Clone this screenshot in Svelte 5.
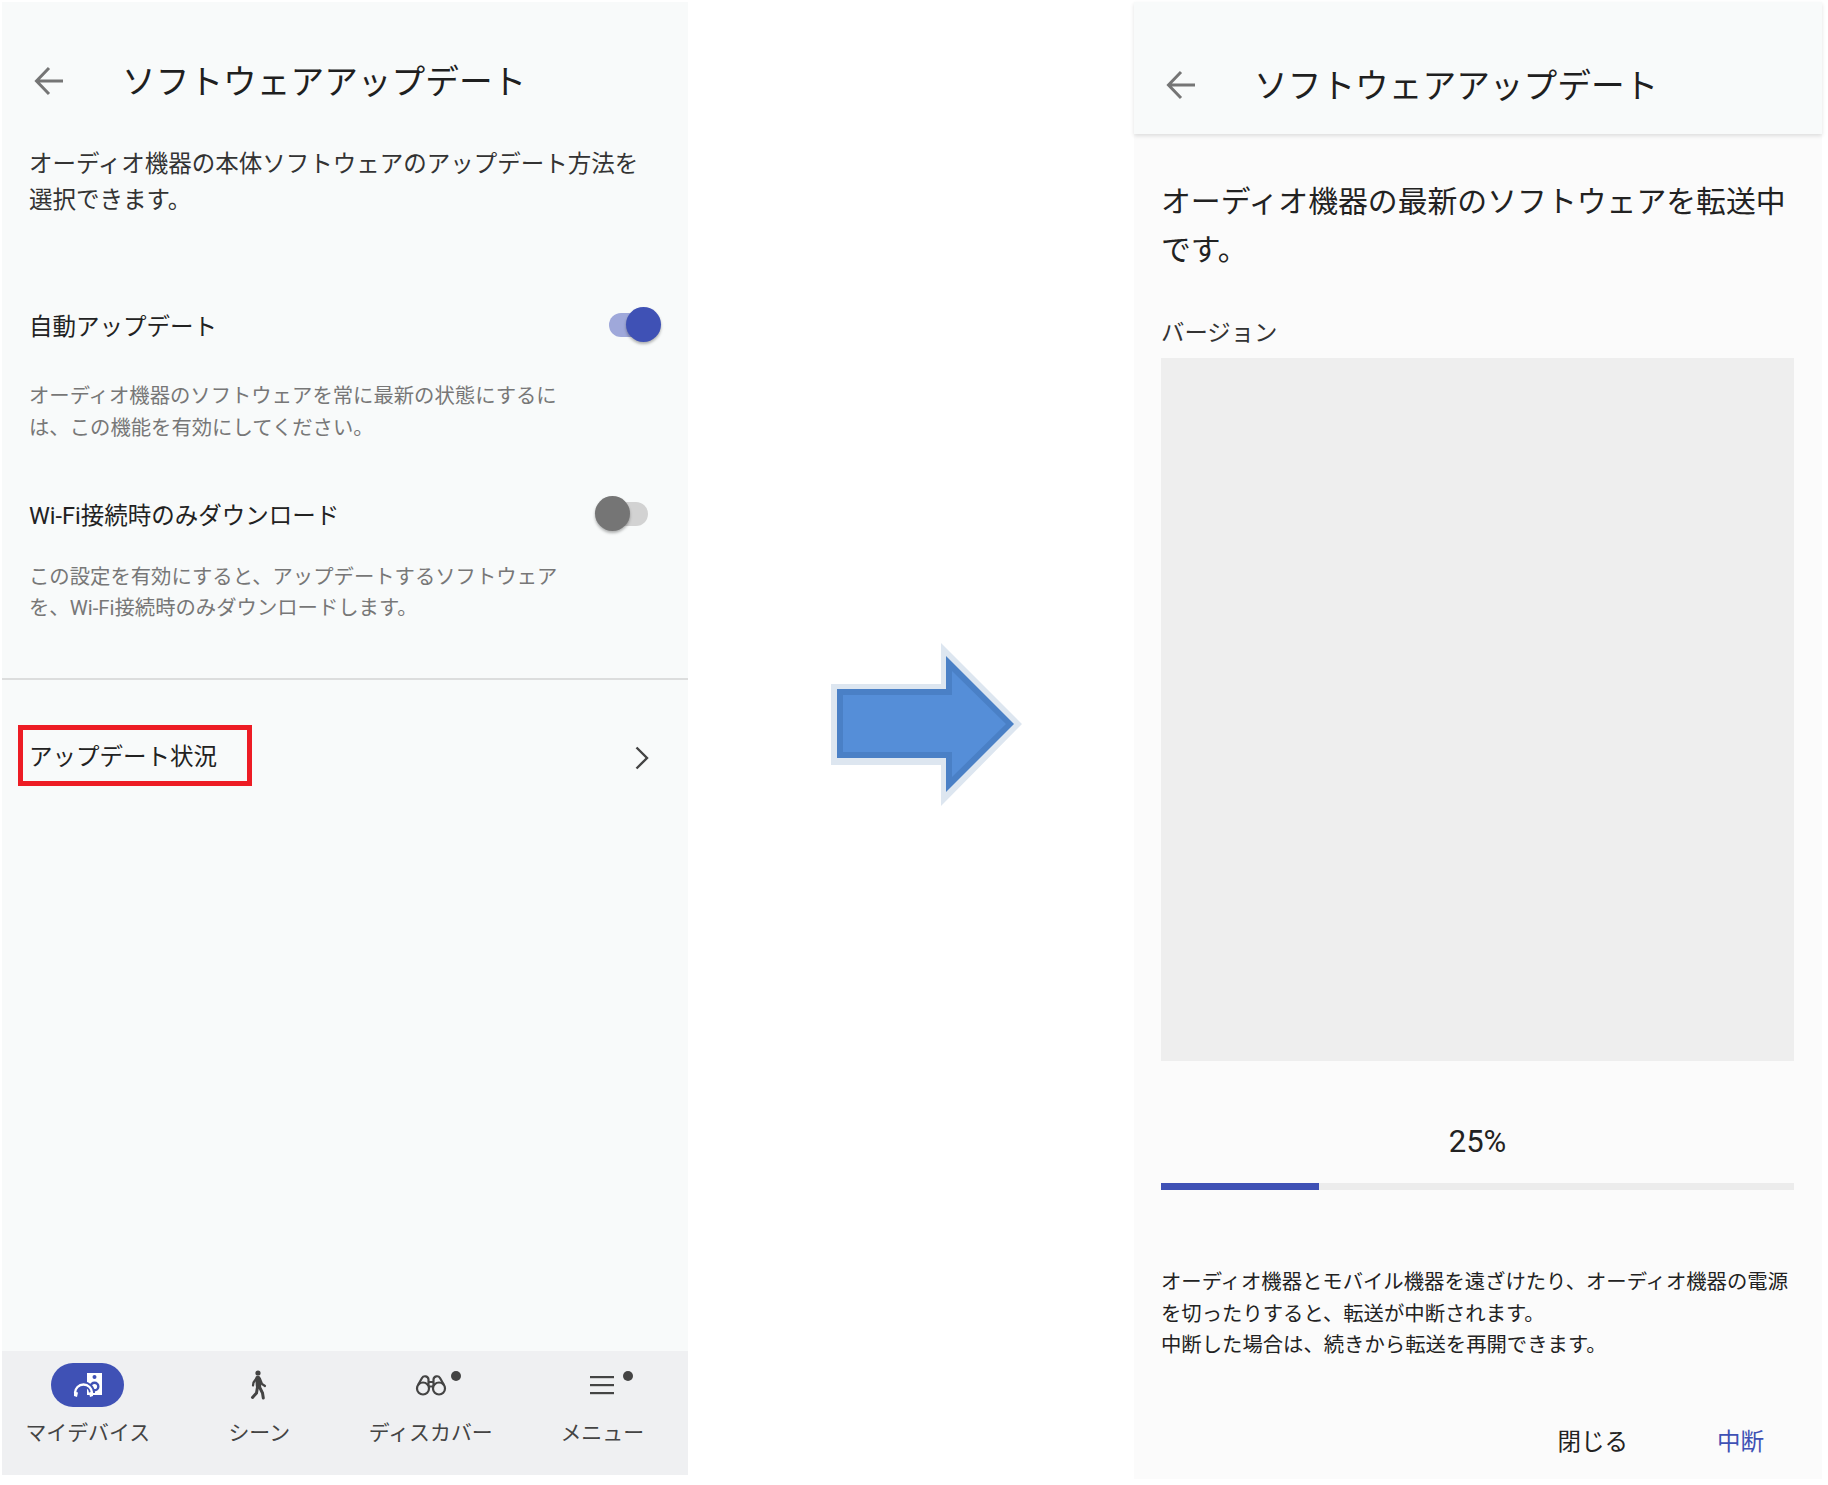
<script>
  const navItems = [
    { label: 'マイデバイス', icon: 'device', active: true },
    { label: 'シーン', icon: 'walk' },
    { label: 'ディスカバー', icon: 'binoculars', dot: true },
    { label: 'メニュー', icon: 'menu', dot: true }
  ];
  const progress = 25;
</script>

{#snippet back()}
  <svg class="back" width="30" height="30" viewBox="0 0 30 30" fill="none" stroke="#757575" stroke-width="3">
    <path d="M29 15H3M15 2 2.5 15 15 28" />
  </svg>
{/snippet}

<div class="page">
  <section class="panel left">
    <header class="head">
      {@render back()}
      <h1>ソフトウェアアップデート</h1>
    </header>
    <p class="intro">オーディオ機器の本体ソフトウェアのアップデート方法を<br />選択できます。</p>

    <div class="row first">
      <span class="row-label">自動アップデート</span>
      <span class="toggle on"><span class="thumb"></span></span>
    </div>
    <p class="hint first-hint">オーディオ機器のソフトウェアを常に最新の状態にするに<br />は、この機能を有効にしてください。</p>

    <div class="row second">
      <span class="row-label">Wi-Fi接続時のみダウンロード</span>
      <span class="toggle off"><span class="thumb"></span></span>
    </div>
    <p class="hint second-hint">この設定を有効にすると、アップデートするソフトウェア<br />を、Wi-Fi接続時のみダウンロードします。</p>

    <hr class="divider" />

    <div class="status-row">
      <span class="status-box">アップデート状況</span>
      <svg class="chevron" width="14" height="24" viewBox="0 0 14 24" fill="none" stroke="#444" stroke-width="2.4">
        <path d="M1.5 1.5 12 12 1.5 22.5" />
      </svg>
    </div>

    <nav class="nav">
      {#each navItems as item}
        <div class="nav-item">
          <div class="nav-icon" class:active={item.active}>
            {#if item.icon === 'device'}
              <svg width="32" height="26" viewBox="0 0 32 26">
                <rect x="15" y="1" width="15" height="22" fill="#fff" />
                <circle cx="22.5" cy="5" r="2" fill="#3f51b5" />
                <circle cx="22.5" cy="14.5" r="5" fill="#3f51b5" />
                <circle cx="22.5" cy="14.5" r="2.6" fill="#fff" />
                <path d="M3 21a8.5 8.5 0 0 1 17 0" fill="none" stroke="#3f51b5" stroke-width="6" />
                <path d="M3 21a8.5 8.5 0 0 1 17 0" fill="none" stroke="#fff" stroke-width="2.4" />
                <path d="M2 19.5l4 1-1 4.5-3-1zM21 19.5l-4 1 1 4.5 3-1z" fill="#fff" />
              </svg>
            {:else if item.icon === 'walk'}
              <svg width="18" height="30" viewBox="0 0 18 30" fill="none" stroke="#444" stroke-linecap="round">
                <circle cx="8" cy="3" r="2.6" fill="#444" stroke="none" />
                <path d="M8 8.5 8.5 16" stroke-width="5.4" />
                <path d="M10 9l2 5 3 2" stroke-width="2.2" />
                <path d="M6 9 3.5 12.5 3 15.5" stroke-width="2.2" />
                <path d="M7.5 17 6.5 23 2.5 27.5" stroke-width="3" />
                <path d="M9.5 17l3 6 .8 5" stroke-width="3" />
              </svg>
            {:else if item.icon === 'binoculars'}
              <svg width="32" height="22" viewBox="0 0 32 22" fill="none" stroke="#444" stroke-width="2.2">
                <circle cx="8" cy="14.5" r="6" />
                <circle cx="24" cy="14.5" r="6" />
                <path d="M3 11 7 4a3.5 3.5 0 0 1 6.5 1.5v6.5M29 11 25 4a3.5 3.5 0 0 0-6.5 1.5v6.5M13.5 8h5M13.5 12.5h5" />
              </svg>
            {:else}
              <svg width="24" height="20" viewBox="0 0 24 20" fill="#444">
                <rect y="1" width="24" height="2.2" />
                <rect y="9" width="24" height="2.2" />
                <rect y="17" width="24" height="2.2" />
              </svg>
            {/if}
            {#if item.dot}<span class="dot"></span>{/if}
          </div>
          <span class="nav-label">{item.label}</span>
        </div>
      {/each}
    </nav>
  </section>

  <div class="arrow-slot">
    <svg width="200" height="170" viewBox="0 0 200 170">
      <path d="M2 43H112V2L193 83 112 165V124H2Z" fill="#dde6f0" />
      <path d="M8 48H117V15L185 83 117 151V117H8Z" fill="#4a80c6" />
      <path d="M14 54H123V30L177 83 123 136V111H14Z" fill="#558ed8" />
    </svg>
  </div>

  <section class="panel right">
    <header class="head raised">
      {@render back()}
      <h1>ソフトウェアアップデート</h1>
    </header>
    <div class="body">
      <h2>オーディオ機器の最新のソフトウェアを転送中<br />です。</h2>
      <div class="version-label">バージョン</div>
      <div class="version-box"></div>
      <div class="percent">{progress}%</div>
      <div class="bar"><div class="bar-fill" style="width: {progress}%"></div></div>
      <p class="note">オーディオ機器とモバイル機器を遠ざけたり、オーディオ機器の電源<br />を切ったりすると、転送が中断されます。<br />中断した場合は、続きから転送を再開できます。</p>
      <div class="actions">
        <span>閉じる</span>
        <span class="primary">中断</span>
      </div>
    </div>
  </section>
</div>

<style>
  :global(body) {
    margin: 0;
    background: #fff;
  }

  .page {
    width: 1828px;
    height: 1485px;
    display: flex;
    align-items: flex-start;
    font-family: Roboto, "Noto Sans CJK JP", sans-serif;
    font-weight: 400;
    color: #222;
    overflow: hidden;
  }

  .panel {
    margin-top: 2px;
    display: flex;
    flex-direction: column;
    background: #f8fafa;
  }

  .left {
    width: 686px;
    height: 1473px;
    margin-left: 2px;
  }

  .right {
    width: 688px;
    height: 1477px;
    background: #fbfbfb;
  }

  .head {
    display: flex;
    align-items: center;
    box-sizing: border-box;
    height: 142px;
    padding: 18px 0 0 32px;
    flex: none;
  }

  .head h1 {
    margin: 2px 0 0 58px;
    font-size: 33.7px;
    line-height: 44px;
    font-weight: 400;
    color: #1f1f1f;
  }

  .raised {
    height: 132px;
    padding-top: 36px;
    background: #f8fafa;
    box-shadow: 0 2px 4px rgba(0, 0, 0, 0.12);
  }

  .back {
    flex: none;
    margin-bottom: 2px;
  }

  .intro {
    margin: 2px 0 0 27px;
    font-size: 23.5px;
    line-height: 36px;
    color: #333;
  }

  .row {
    display: flex;
    align-items: center;
    justify-content: space-between;
    height: 40px;
    padding-left: 27px;
  }

  .first {
    margin-top: 87px;
  }

  .second {
    margin-top: 49.5px;
  }

  .row-label {
    font-size: 23.5px;
    color: #222;
  }

  .hint {
    margin: 0 0 0 27px;
    font-size: 20.35px;
    line-height: 31.5px;
    color: #777;
  }

  .first-hint {
    margin-top: 36px;
  }

  .second-hint {
    margin-top: 28px;
  }

  .toggle {
    position: relative;
    display: block;
    width: 46px;
    height: 24px;
    border-radius: 12px;
  }

  .toggle.on {
    background: #9fa8da;
    margin-right: 33px;
  }

  .toggle.off {
    background: #d2d2d2;
    margin-right: 40px;
  }

  .thumb {
    position: absolute;
    top: -6px;
    width: 35px;
    height: 35px;
    border-radius: 50%;
    box-shadow: 0 2px 3px rgba(0, 0, 0, 0.3);
  }

  .on .thumb {
    right: -6px;
    background: #3f51b5;
  }

  .off .thumb {
    left: -7px;
    background: #757575;
  }

  .divider {
    margin: 53.5px 0 0;
    border: none;
    height: 2px;
    background: #dcdddd;
  }

  .status-row {
    display: flex;
    align-items: center;
    justify-content: space-between;
    margin: 45px 0 0 16px;
    padding-right: 39px;
  }

  .status-box {
    box-sizing: border-box;
    width: 234px;
    height: 61px;
    padding-left: 6px;
    border: 5px solid #ed1c24;
    font-size: 23.5px;
    line-height: 55px;
    color: #222;
  }

  .chevron {
    margin-top: 5px;
  }

  .nav {
    margin-top: auto;
    height: 124px;
    box-sizing: border-box;
    padding-top: 12px;
    display: grid;
    grid-template-columns: repeat(4, 1fr);
    background: #eff0f2;
  }

  .nav-item {
    display: flex;
    flex-direction: column;
    align-items: center;
    gap: 12px;
  }

  .nav-icon {
    position: relative;
    display: flex;
    align-items: center;
    justify-content: center;
    width: 73px;
    height: 44px;
    border-radius: 22px;
  }

  .nav-icon.active {
    background: #3f51b5;
  }

  .dot {
    position: absolute;
    left: 57px;
    top: 8px;
    width: 10px;
    height: 10px;
    border-radius: 50%;
    background: #444;
  }

  .nav-label {
    font-size: 20.9px;
    line-height: 28px;
    color: #444;
  }

  .arrow-slot {
    flex: none;
    width: 446px;
    display: flex;
    box-sizing: border-box;
    padding: 641px 0 0 141px;
  }

  .body {
    padding: 0 28px 0 27px;
  }

  h2 {
    margin: 44px 0 0;
    font-size: 29.85px;
    line-height: 48px;
    font-weight: 400;
    color: #222;
  }

  .version-label {
    margin-top: 44px;
    font-size: 23.4px;
    line-height: 30px;
    color: #333;
  }

  .version-box {
    margin-top: 10px;
    height: 703px;
    background: #eee;
  }

  .percent {
    margin-top: 61px;
    font-size: 31px;
    line-height: 40px;
    font-weight: 400;
    text-align: center;
    color: #222;
  }

  .bar {
    margin-top: 21px;
    height: 7px;
    background: #ececec;
  }

  .bar-fill {
    height: 100%;
    background: #3f51b5;
  }

  .note {
    margin: 77px 0 0;
    font-size: 20.35px;
    line-height: 31.5px;
    color: #222;
  }

  .actions {
    display: flex;
    justify-content: flex-end;
    gap: 89px;
    margin-top: 60px;
    padding-right: 30px;
    font-size: 23.5px;
    line-height: 40px;
    color: #222;
  }

  .primary {
    color: #3f51b5;
  }
</style>
